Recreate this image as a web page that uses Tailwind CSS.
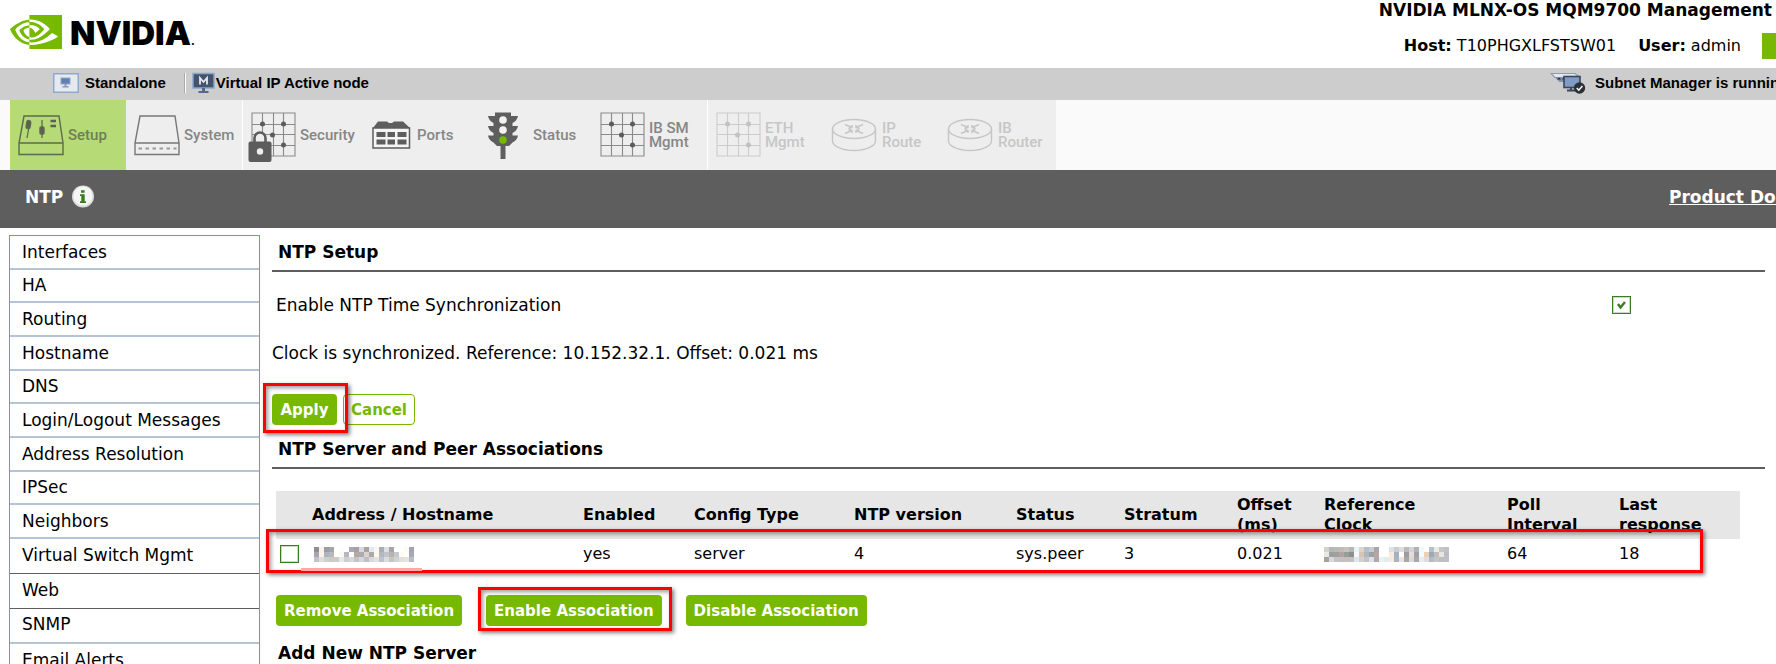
<!DOCTYPE html>
<html lang="en">
<head>
<meta charset="utf-8">
<title>NVIDIA MLNX-OS MQM9700 Management</title>
<script src="https://cdn.jsdelivr.net/npm/@tailwindcss/browser@4"></script>
</head>
<body class="flex h-screen flex-col overflow-hidden bg-white font-['Verdana','DejaVu_Sans',sans-serif] text-[17px] leading-6 text-black">

<header class="flex min-h-[68px] shrink-0 justify-between">
  <a href="#" class="flex items-start gap-2 pt-[15px] pl-[10px]" aria-label="NVIDIA home">
    <svg class="h-[34px] w-[52px]" viewBox="0 4.063 24 15.874" preserveAspectRatio="none" fill="#76b900"><path d="M8.948 8.798v-1.43a6.7 6.7 0 0 1 .424-.018c3.922-.124 6.493 3.374 6.493 3.374s-2.774 3.851-5.75 3.851c-.398 0-.787-.062-1.158-.185v-4.346c1.528.185 1.837.857 2.747 2.385l2.04-1.714s-1.492-1.952-4-1.952a6.016 6.016 0 0 0-.796.035m0-4.735v2.138l.424-.027c5.45-.185 9.01 4.47 9.01 4.47s-4.08 4.964-8.33 4.964c-.37 0-.733-.035-1.095-.097v1.325c.3.035.61.062.91.062 3.957 0 6.82-2.023 9.593-4.408.459.371 2.34 1.263 2.73 1.652-2.633 2.208-8.772 3.984-12.253 3.984-.335 0-.653-.018-.971-.053v1.864H24V4.063zm0 10.326v1.131c-3.657-.654-4.673-4.46-4.673-4.46s1.758-1.944 4.673-2.262v1.237H8.94c-1.528-.186-2.73 1.245-2.73 1.245s.68 2.412 2.739 3.11M2.456 10.9s2.164-3.197 6.5-3.533V6.201C4.153 6.59 0 10.653 0 10.653s2.35 6.802 8.948 7.42v-1.237c-4.84-.6-6.492-5.936-6.492-5.936z"/></svg>
    <span class="font-[Inter,sans-serif] text-[33px] leading-[36px] font-black">NVIDIA<span class="text-[10px]">.</span></span>
  </a>
  <div class="flex flex-col items-end pt-px">
    <h1 class="pr-1 leading-[18px] font-bold whitespace-nowrap">NVIDIA MLNX-OS MQM9700 Management</h1>
    <div class="mt-[14px] flex items-center text-base whitespace-nowrap">
      <span><b>Host:</b> T10PHGXLFSTSW01</span>
      <span class="ml-[22px]"><b>User:</b> admin</span>
      <span class="ml-[21px] h-[26px] w-[14px] bg-[#76b900]"></span>
    </div>
  </div>
</header>

<div class="flex h-8 shrink-0 items-center bg-[#cdcdcd] pb-[2px] pl-[53px] font-['Liberation_Sans',sans-serif] text-[15px] font-bold whitespace-nowrap">
  <svg class="h-5 w-[26px]" viewBox="0 0 26 20"><rect x=".75" y=".75" width="24.5" height="18.5" fill="#e6e9ee" stroke="#8fa9cc" stroke-width="1.5"/><rect x="8" y="5" width="9" height="6" fill="#5f7fb0" stroke="#8ea6cc"/><path d="M11.500 11h2v2h2v1.500h-6V13h2z" fill="#8a9bb5"/></svg>
  <span class="ml-[6px]">Standalone</span>
  <span class="ml-[18px] h-5 w-[2px] border-l border-[#aaa] bg-white"></span>
  <svg class="ml-[6px] h-[22px] w-[23px]" viewBox="0 0 23 22"><rect x="1" y="1.500" width="21" height="14.500" fill="#44546c" stroke="#8aa5cc" stroke-width="1.500"/><path d="M10 16h3v3h3.500v2h-10v-2H10z" fill="#53688a"/><path d="M8 12.500V6l3.500 4L15 6v6.500" fill="none" stroke="#e8e8e8" stroke-width="1.800"/></svg>
  <span class="ml-px">Virtual IP Active node</span>
  <div class="ml-auto flex w-[226px] shrink-0 items-center overflow-hidden">
    <svg class="h-[22px] w-9 shrink-0" viewBox="0 0 36 22"><path d="M1 1.500h24l5 4H5z" fill="#e4e8ec" stroke="#8b9cac" stroke-width="1.200"/><path d="M4.500 5h13v5H9.500z" fill="#7f92a8"/><path d="M7 7.500l2-2 2 2zM12 7.500l1.500-2 1.500 2z" fill="#1c2632"/><rect x="14" y="4.500" width="16" height="11" fill="#7f9cc6" stroke="#3c4654" stroke-width="1.600"/><path d="M17 18.500h8M21 16v3" stroke="#3c4654" stroke-width="1.800"/><circle cx="29.500" cy="16" r="5.700" fill="#2c3136"/><path d="M26.800 16l2 2.200 3.600-4.200" fill="none" stroke="#fff" stroke-width="1.500"/></svg>
    <span class="ml-[9px]">Subnet Manager is running</span>
  </div>
</div>

<nav class="flex shrink-0 bg-[#fafafa] pl-[10px] font-[Roboto,sans-serif] text-[15px] leading-[14px] font-medium text-[#868686]">
  <a href="#" class="flex w-[116px] items-center bg-[#b5da76] text-[#6e7f55]">
    <svg class="h-[70px] w-[58px] shrink-0" viewBox="0 0 58 70" fill="none" stroke="#5e6a4c" stroke-width="1.400"><path d="M14 16h35l4 27v11.500H9V43zM9 43h44"/><path d="M17 38l2-11M32 20v18" stroke-width="1.300"/><rect x="16.500" y="20.500" width="4" height="8" rx="2" fill="#5b5f55" transform="rotate(8 18 24)"/><rect x="30" y="27" width="4" height="7" rx="1" fill="#5b5f55"/><path d="M40.500 21h5.500M40.500 26h5.500" stroke-width="2.600" stroke="#5b5f55"/></svg>Setup</a>
  <a href="#" class="flex w-[116px] items-center bg-[#eee]">
    <svg class="h-[70px] w-[58px] shrink-0" viewBox="0 0 58 70" fill="none" stroke="#777" stroke-width="1.400"><path d="M14 16h35l4 27v11.500H9V43zM9 43h44"/><path d="M12.500 48.500h38" stroke="#999" stroke-width="2.200" stroke-dasharray="3.500 3.500"/></svg>System</a>
  <a href="#" class="flex w-[117px] items-center border-l border-white bg-[#eee]">
    <svg class="h-[70px] w-[57px] shrink-0" viewBox="1 0 57 70"><path d="M10 13h43v43H10zM20.500 13v43M31.500 13v43M41.500 13v43M10 24.500h43M10 34.500h43M10 45.500h43" fill="none" stroke="#8a8a8a" stroke-width="1.100"/><g fill="#5c5c5c"><circle cx="20.500" cy="24" r="2.500"/><circle cx="41.500" cy="24" r="2.500"/><circle cx="30.500" cy="35" r="2.500"/><circle cx="41.500" cy="45" r="2.500"/></g><path d="M12.500 43v-5a5.500 5.500 0 0 1 11 0v5" fill="#eee" stroke="#5c5c5c" stroke-width="2.600"/><rect x="6.500" y="41.500" width="23" height="20.500" rx="2" fill="#5c5c5c"/><circle cx="18" cy="51.500" r="3.200" fill="#eee"/></svg>Security</a>
  <a href="#" class="flex w-[116px] items-center bg-[#eee]">
    <svg class="h-[70px] w-[58px] shrink-0" viewBox="0 0 58 70"><path d="M14 28l5-6.500h9l2 1.500h3l2-1.500h9l7 6.500z" fill="#5e5e5e"/><path d="M14 28h36.500v20H14z" fill="#f5f5f5" stroke="#5e5e5e" stroke-width="1.500"/><path d="M17.500 32h9v5h-9zM28.500 32H36v5h-7.500zM38.500 32h9v5h-9zM17.500 39.500h9v5h-9zM28.500 39.500H36v5h-7.500zM38.500 39.500h9v5h-9z" fill="#5e5e5e"/></svg>Ports</a>
  <a href="#" class="flex w-[116px] items-center bg-[#eee]">
    <svg class="h-[70px] w-[58px] shrink-0" viewBox="0 0 58 70"><path d="M20 12.500h16v3.500h7q-1 5-5.500 7v3H43q-1 5-5.500 7v2.500H43q-1 5-5.500 7L34 46h-3.500v13h-5V46H22l-3.500-3.500q-4.500-2-5.500-7h5.500V33q-4.500-2-5.500-7h5.500v-3q-4.500-2-5.500-7h7z" fill="#5e5e5e"/><circle cx="28" cy="20" r="3.800" fill="#f2f2f2"/><circle cx="28" cy="30" r="3.800" fill="#f2f2f2"/><circle cx="28" cy="40" r="3.800" fill="#76b900"/></svg>Status</a>
  <a href="#" class="flex w-[116px] items-center bg-[#eee]">
    <svg class="h-[70px] w-[58px] shrink-0" viewBox="0 0 58 70"><path d="M10 13h43v43H10zM20.500 13v43M31.500 13v43M41.500 13v43M10 24.500h43M10 34.500h43M10 45.500h43" fill="none" stroke="#8a8a8a" stroke-width="1.100"/><g fill="#5c5c5c"><circle cx="20.500" cy="24" r="2.500"/><circle cx="41.500" cy="24" r="2.500"/><circle cx="30.500" cy="35" r="2.500"/><circle cx="41.500" cy="45" r="2.500"/></g></svg><span>IB SM<br>Mgmt</span></a>
  <a href="#" class="flex w-[117px] items-center border-l border-white bg-[#eee] text-[#c6c6c6]">
    <svg class="h-[70px] w-[57px] shrink-0" viewBox="1 0 57 70"><path d="M10 13h43v43H10zM20.500 13v43M31.500 13v43M41.500 13v43M10 24.500h43M10 34.500h43M10 45.500h43" fill="none" stroke="#ccc" stroke-width="1.100"/><g fill="#c2c2c2"><circle cx="20.500" cy="24" r="2.500"/><circle cx="41.500" cy="24" r="2.500"/><circle cx="30.500" cy="35" r="2.500"/><circle cx="41.500" cy="45" r="2.500"/></g></svg><span>ETH<br>Mgmt</span></a>
  <a href="#" class="flex w-[116px] items-center bg-[#eee] text-[#c6c6c6]">
    <svg class="h-[70px] w-[58px] shrink-0" viewBox="0 0 58 70" fill="none" stroke="#c6c6c6" stroke-width="1.400"><ellipse cx="30" cy="29" rx="21.500" ry="9.500"/><path d="M8.500 29v12c0 5 9.500 9.500 21.500 9.500S51.500 46 51.500 41V29"/><path d="M21 24.500l7 3M39 24.500l-7 3M21 33.500l7-3M39 33.500l-7-3M24.500 28.500l3.500-1v-2.500M35.500 28.500l-3.500-1v-2.500M24.500 29.500l3.500 1v2.500M35.500 29.500l-3.500 1v2.500"/></svg><span>IP<br>Route</span></a>
  <a href="#" class="flex w-[116px] items-center bg-[#eee] text-[#c6c6c6]">
    <svg class="h-[70px] w-[58px] shrink-0" viewBox="0 0 58 70" fill="none" stroke="#c6c6c6" stroke-width="1.400"><ellipse cx="30" cy="29" rx="21.500" ry="9.500"/><path d="M8.500 29v12c0 5 9.500 9.500 21.500 9.500S51.500 46 51.500 41V29"/><path d="M21 24.500l7 3M39 24.500l-7 3M21 33.500l7-3M39 33.500l-7-3M24.500 28.500l3.500-1v-2.500M35.500 28.500l-3.500-1v-2.500M24.500 29.500l3.500 1v2.500M35.500 29.500l-3.500 1v2.500"/></svg><span>IB<br>Router</span></a>
</nav>

<div class="flex shrink-0 items-center bg-[#5e5e5e] pt-[15px] pb-[19px] pl-[25px] font-bold text-white">
  <h2>NTP</h2>
  <button type="button" class="ml-[8px]" aria-label="Page information">
    <svg class="block h-6 w-6" viewBox="0 0 24 24"><circle cx="12" cy="11.500" r="11" fill="#dcdcdc"/><circle cx="12" cy="11" r="9.500" fill="#f6f6f6"/><path d="M10 5.200h3.600v2.600H10zM9 9.300h4.700v6.900H15V18H9v-1.800h1.300v-5.100H9z" fill="#3a7d1e"/></svg>
  </button>
  <a href="#" class="ml-auto w-[107px] shrink-0 overflow-hidden whitespace-nowrap underline">Product Doc</a>
</div>

<div class="flex min-h-0 flex-1">
  <aside class="mt-[7px] ml-[9px] w-[251px] shrink-0 border border-b-0 border-[#76b900]">
    <ul class="grid min-h-[303px] auto-rows-fr">
      <li class="border-b-2 border-[#b4c4d6]"><a href="#" class="flex h-full items-center px-3">Interfaces</a></li>
      <li class="border-b-2 border-[#b4c4d6]"><a href="#" class="flex h-full items-center px-3">HA</a></li>
      <li class="border-b-2 border-[#b4c4d6]"><a href="#" class="flex h-full items-center px-3">Routing</a></li>
      <li class="border-b-2 border-[#b4c4d6]"><a href="#" class="flex h-full items-center px-3">Hostname</a></li>
      <li class="border-b-2 border-[#b4c4d6]"><a href="#" class="flex h-full items-center px-3">DNS</a></li>
      <li class="border-b-2 border-[#b4c4d6]"><a href="#" class="flex h-full items-center px-3">Login/Logout Messages</a></li>
      <li class="border-b-2 border-[#b4c4d6]"><a href="#" class="flex h-full items-center px-3">Address Resolution</a></li>
      <li class="border-b-2 border-[#b4c4d6]"><a href="#" class="flex h-full items-center px-3">IPSec</a></li>
      <li class="border-b-2 border-[#b4c4d6]"><a href="#" class="flex h-full items-center px-3">Neighbors</a></li>
    </ul>
    <ul class="grid auto-rows-[35px]">
      <li class="border-b border-[#5e5e5e]"><a href="#" class="flex h-full items-center px-3 pb-[3px]">Virtual Switch Mgmt</a></li>
      <li class="border-b border-[#5e5e5e]"><a href="#" class="flex h-full items-center px-3 pb-[3px]">Web</a></li>
      <li class="border-b-2 border-[#b4c4d6]"><a href="#" class="flex h-full items-center px-3 pb-[3px]">SNMP</a></li>
      <li><a href="#" class="flex h-full items-center px-3 pb-[3px]">Email Alerts</a></li>
    </ul>
  </aside>

  <main class="min-w-0 flex-1 pt-3 pr-[11px] pl-3">
    <h3 class="border-b-2 border-[#5e5e5e] pb-[6px] pl-[6px] font-bold">NTP Setup</h3>
    <div class="mt-[21px] flex items-center justify-between pr-[134px] pl-1">
      <label for="ntp-enable">Enable NTP Time Synchronization</label>
      <span class="relative flex">
        <input id="ntp-enable" type="checkbox" checked class="h-[18px] w-[19px] appearance-none border border-[#3a7d1e] bg-white shadow-[inset_0_0_0_1px_#c9dcc3]">
        <svg class="pointer-events-none absolute inset-0 h-[18px] w-[19px]" viewBox="0 0 19 18"><path d="M6 8l2.500 3.500L13 6" fill="none" stroke="#3a7d1e" stroke-width="2.400"/></svg>
      </span>
    </div>
    <p class="mt-6">Clock is synchronized. Reference: 10.152.32.1. Offset: 0.021 ms</p>

    <div class="mt-[29px] flex gap-[6px]">
      <div class="relative z-10">
        <button type="button" class="block h-[31px] min-w-[65px] rounded bg-[#76b900] px-2 text-[15px] font-bold text-white">Apply</button>
        <span class="pointer-events-none absolute -top-[11px] -right-[11px] -bottom-2 -left-[9px] border-3 border-[#fe0000] shadow-[2px_2px_4px_rgba(0,0,0,0.5),inset_2px_2px_4px_rgba(0,0,0,0.4)]"></span>
      </div>
      <button type="button" class="h-[31px] rounded border border-[#76b900] bg-white px-[7px] text-[15px] font-bold text-[#76b900]">Cancel</button>
    </div>

    <h3 class="mt-3 border-b-2 border-[#5e5e5e] pb-[6px] pl-[6px] font-bold">NTP Server and Peer Associations</h3>

    <div class="relative mt-[22px] mr-[25px] ml-1">
      <table class="w-full table-fixed text-left text-base">
        <colgroup><col class="w-[36px]"><col class="w-[271px]"><col class="w-[111px]"><col class="w-[160px]"><col class="w-[162px]"><col class="w-[108px]"><col class="w-[113px]"><col class="w-[87px]"><col class="w-[183px]"><col class="w-[112px]"><col class="w-[121px]"></colgroup>
        <thead>
          <tr class="h-12 bg-[#e6e6e6] leading-5">
            <th></th><th>Address / Hostname</th><th>Enabled</th><th>Config Type</th><th>NTP version</th><th>Status</th><th>Stratum</th><th>Offset<br>(ms)</th><th>Reference<br>Clock</th><th>Poll<br>Interval</th><th>Last<br>response</th>
          </tr>
        </thead>
        <tbody>
          <tr class="h-[30px]">
            <td><input type="checkbox" aria-label="Select association" class="ml-1 block h-[18px] w-[19px] appearance-none border border-[#3a7d1e] bg-white shadow-[inset_0_0_0_1px_#c9dcc3]"></td>
            <td><svg id="addr" class="ml-[2px] block h-[15px] w-[100px]" viewBox="0 0 20 3" shape-rendering="crispEdges"></svg></td>
            <td>yes</td><td>server</td><td>4</td><td>sys.peer</td><td>3</td><td>0.021</td>
            <td><svg id="refclock" class="block h-[15px] w-[125px]" viewBox="0 0 25 3" shape-rendering="crispEdges"></svg></td>
            <td>64</td><td>18</td>
          </tr>
        </tbody>
      </table>
      <span class="pointer-events-none absolute top-[38px] right-[37px] -left-[10px] h-11 border-3 border-[#fe0000] shadow-[2px_2px_4px_rgba(0,0,0,0.5),inset_2px_2px_4px_rgba(0,0,0,0.4)]"></span>
      <span class="pointer-events-none absolute top-[77px] left-[25px] h-[3px] w-[121px] bg-[#ffa8a8]"></span>
    </div>

    <div class="mt-[26px] ml-1 flex gap-6">
      <button type="button" class="h-[31px] rounded bg-[#76b900] px-2 text-[15px] font-bold text-white">Remove Association</button>
      <div class="relative">
        <button type="button" class="block h-[31px] rounded bg-[#76b900] px-2 text-[15px] font-bold text-white">Enable Association</button>
        <span class="pointer-events-none absolute -top-2 -right-[10px] -bottom-[5px] -left-2 border-3 border-[#fe0000] shadow-[2px_2px_4px_rgba(0,0,0,0.5),inset_2px_2px_4px_rgba(0,0,0,0.4)]"></span>
      </div>
      <button type="button" class="h-[31px] rounded bg-[#76b900] px-2 text-[15px] font-bold text-white">Disable Association</button>
    </div>

    <h3 class="mt-[15px] pl-[6px] font-bold">Add New NTP Server</h3>
  </main>
</div>

<script>
  // Pixelated masks for the two redacted addresses, one colour per cell, row by row.
  const masks = {
    addr: [
      '8f8f8f fbf3ea 9c9ca2 a3a5ab ffffff fdfdfd ffffff a9a8b4 a2a2a4 d9d9d9 a8a39f ddeaf6 fff6ec a8aebb dfe0e3 a6a6a8 ffffff ffffff fffaf3 a4a4b0',
      'a7a5b1 fbf3ea a9b5c5 b9b9b9 ffffff fff8ee b5b8c2 ffffff bba798 a9acb8 ddd3cc a9a9a9 fff6ec b5b8c0 c0c4ce b9b5ae c5c9d2 fffaf3 ffffff a8a7b4',
      'c3c3c3 dedede d0d0d0 cfc9c5 cccccc e8e8e8 cfcfcf d8d8dc c4c4c8 d6d6d6 bfbfc3 d8d8d8 e2e2e2 bfc2cc dcdcdc c5c5c5 d3d3d3 e0e0e0 e7e2da bcbcc6'
    ],
    refclock: [
      'd5d2ce b5b5b5 b9b9b9 bcbcbc c6c2be b6b6b6 e8f4fb ded4cc b5c0ca c4cbd2 aaa6a8 ffffff ffffff d9e2ea c5ced6 e3ddd8 bababa d2d2da b2b2b6 eff8fc ffffff b9c0c4 e8ece9 c6c6ca bfc1c7',
      'e8e8e8 9ba09e a19f9d b5a3a0 979e9a 8e8e8e f2fafd d9c4b2 a9b8c4 9fa4a2 b7a6a8 ffffff ffffff ffead7 a3b1c1 ffffff 9c9c9e e6ddd7 a0a0a2 f3fbff f1cfb4 9cabb8 c4bcb6 e6e5df b9bcc1',
      'a9a097 d7dbdf c4c4c4 bfc1c7 c5c0bc c3c3c3 dde6ec d1d1d1 c7c3bf d9e0ec b4a6a8 e9f1f3 dfeef4 fbead8 a7b5c4 e9e4e0 aaa6a6 d8d8d8 a8a8aa e8edf1 e0ddda b5bac0 c1c6ca bbbec4 bdc0c6'
    ]
  };
  for (const [id, rows] of Object.entries(masks)) {
    const svg = document.getElementById(id);
    rows.forEach((row, y) => row.split(' ').forEach((hex, x) => {
      const r = document.createElementNS('http://www.w3.org/2000/svg', 'rect');
      for (const [k, v] of Object.entries({ x, y, width: 1, height: 1, fill: '#' + hex })) r.setAttribute(k, v);
      svg.append(r);
    }));
  }
</script>
</body>
</html>
